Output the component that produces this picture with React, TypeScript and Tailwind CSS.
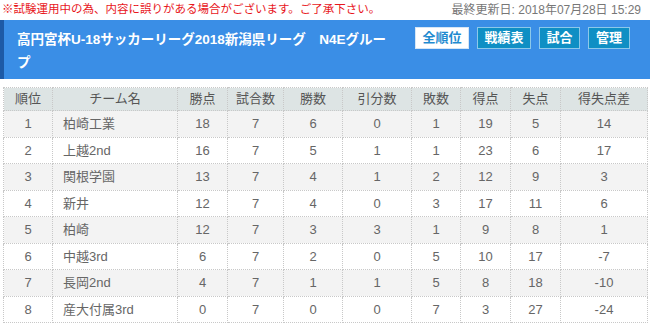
import React from "react";

type Row = {
  rank: number;
  team: string;
  pts: number;
  played: number;
  win: number;
  draw: number;
  lose: number;
  gf: number;
  ga: number;
  gd: number;
};

const rows: Row[] = [
  { rank: 1, team: "柏崎工業", pts: 18, played: 7, win: 6, draw: 0, lose: 1, gf: 19, ga: 5, gd: 14 },
  { rank: 2, team: "上越2nd", pts: 16, played: 7, win: 5, draw: 1, lose: 1, gf: 23, ga: 6, gd: 17 },
  { rank: 3, team: "関根学園", pts: 13, played: 7, win: 4, draw: 1, lose: 2, gf: 12, ga: 9, gd: 3 },
  { rank: 4, team: "新井", pts: 12, played: 7, win: 4, draw: 0, lose: 3, gf: 17, ga: 11, gd: 6 },
  { rank: 5, team: "柏崎", pts: 12, played: 7, win: 3, draw: 3, lose: 1, gf: 9, ga: 8, gd: 1 },
  { rank: 6, team: "中越3rd", pts: 6, played: 7, win: 2, draw: 0, lose: 5, gf: 10, ga: 17, gd: -7 },
  { rank: 7, team: "長岡2nd", pts: 4, played: 7, win: 1, draw: 1, lose: 5, gf: 8, ga: 18, gd: -10 },
  { rank: 8, team: "産大付属3rd", pts: 0, played: 7, win: 0, draw: 0, lose: 7, gf: 3, ga: 27, gd: -24 },
];

const headers = ["順位", "チーム名", "勝点", "試合数", "勝数", "引分数", "敗数", "得点", "失点", "得失点差"];
const widths = [49, 125, 50, 56, 59, 69, 49, 50, 50, 87];

const cell = "border border-dotted border-[#c8c8c8] text-center";

export default function App() {
  return (
    <div className="w-[650px] h-[325px] overflow-hidden bg-white font-['Liberation_Sans','Noto_Sans_CJK_JP',sans-serif]">
      <div className="flex h-[20px] items-center justify-between pl-[2px] pr-[9px]">
        <span className="text-[11.5px] text-[#e8161c]">※試験運用中の為、内容に誤りがある場合がございます。ご了承下さい。</span>
        <span className="text-[12px] text-[#777]">最終更新日: 2018年07月28日 15:29</span>
      </div>

      <div className="flex h-[59px] border-l-[4px] border-[#1d5aa6] bg-[#3a8ee6]">
        <h1 className="w-[390px] shrink-0 pl-[13px] pt-[8px] text-[13.5px] font-bold leading-[23px] text-white">
          高円宮杯U-18サッカーリーグ2018新潟県リーグ　N4Eグループ
        </h1>
        <div className="flex gap-[8px] pl-[21px] pt-[7px]">
          <button className="h-[22px] w-[54px] border border-[#d5e6f5] bg-white text-[13px] font-bold text-[#1f8bd0]">
            全順位
          </button>
          <button className="h-[22px] w-[54px] border border-[#8cc8ea] bg-[#0f8fc4] text-[13px] font-bold text-white">
            戦績表
          </button>
          <button className="h-[22px] w-[41px] border border-[#8cc8ea] bg-[#0f8fc4] text-[13px] font-bold text-white">
            試合
          </button>
          <button className="h-[22px] w-[42px] border border-[#8cc8ea] bg-[#0f8fc4] text-[13px] font-bold text-white">
            管理
          </button>
        </div>
      </div>

      <div className="mx-[3px] mt-[8px]">
        <table className="w-[644px] table-fixed border-collapse text-[13px] text-[#666]">
          <colgroup>
            {widths.map((w, i) => (
              <col key={i} style={{ width: w }} />
            ))}
          </colgroup>
          <thead>
            <tr className="h-[23px] bg-[#dde4e4]">
              {headers.map((h) => (
                <th key={h} className={`${cell} font-normal text-[#555]`}>
                  {h}
                </th>
              ))}
            </tr>
          </thead>
          <tbody>
            {rows.map((r) => (
              <tr key={r.rank} className={`h-[26.5px] ${r.rank % 2 === 1 ? "bg-[#f3f3f3]" : "bg-white"}`}>
                <td className={cell}>{r.rank}</td>
                <td className="border border-dotted border-[#c8c8c8] pl-[10px] text-left">{r.team}</td>
                <td className={cell}>{r.pts}</td>
                <td className={cell}>{r.played}</td>
                <td className={cell}>{r.win}</td>
                <td className={cell}>{r.draw}</td>
                <td className={cell}>{r.lose}</td>
                <td className={cell}>{r.gf}</td>
                <td className={cell}>{r.ga}</td>
                <td className={cell}>{r.gd}</td>
              </tr>
            ))}
          </tbody>
        </table>
      </div>
    </div>
  );
}
